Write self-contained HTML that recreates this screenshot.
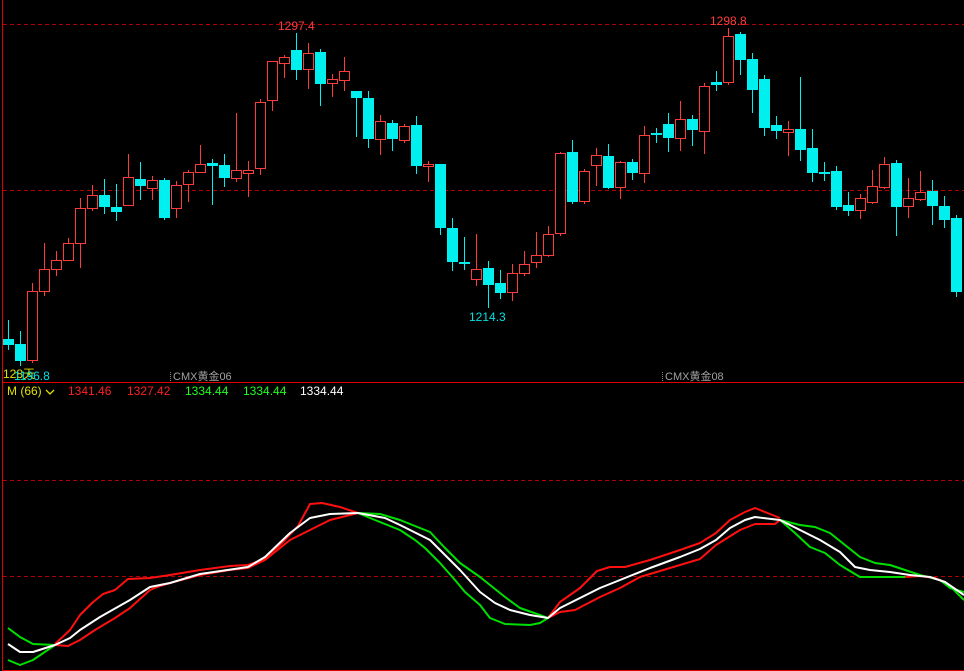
<!DOCTYPE html>
<html><head><meta charset="utf-8"><style>
html,body{margin:0;padding:0;background:#000;width:964px;height:671px;overflow:hidden}
svg{display:block}
text{font-family:"Liberation Sans","Noto Sans CJK SC",sans-serif;font-size:12px}
</style></head><body>
<svg width="964" height="671" viewBox="0 0 964 671" xmlns="http://www.w3.org/2000/svg">
<rect width="964" height="671" fill="#000"/>
<path stroke="#b00000" stroke-dasharray="4,3" shape-rendering="crispEdges" d="M3 24.5H964M3 190.5H964M3 480.5H964M3 576.5H964"/>
<path stroke="#e00000" shape-rendering="crispEdges" d="M2.5 0V671M3 382.5H964M3 670.5H964"/>
<path shape-rendering="crispEdges" stroke="#ff3c3c" fill="none" d="M32.5 283V363M44.5 243V296M56.5 251V276M68.5 238V260M80.5 198V268M92.5 185V211M128.5 154V205M152.5 176V200M176.5 181V218M188.5 170V202M200.5 145V172M236.5 113V182M248.5 161V197M260.5 99V175M272.5 61V111M284.5 55V78M308.5 43V89M332.5 74V97M344.5 57V91M380.5 115V155M404.5 124V143M428.5 161V182M476.5 234V286M512.5 264V301M524.5 251V276M536.5 232V268M548.5 226V257M560.5 152V236M584.5 169V204M596.5 148V186M620.5 161V199M644.5 126V183M680.5 101V151M704.5 83V154M728.5 28V85M788.5 121V156M860.5 194V219M872.5 170V204M884.5 157V189M908.5 178V218M920.5 171V201"/>
<path shape-rendering="crispEdges" stroke="#00f0f0" fill="none" d="M8.5 320V350M20.5 331V366M104.5 179V214M116.5 184V221M140.5 162V200M164.5 178V220M212.5 159V205M224.5 154V187M296.5 33V80M320.5 49V106M356.5 91V137M368.5 91V148M392.5 120V151M416.5 116V174M440.5 164V235M452.5 218V271M464.5 237V270M488.5 261V308M500.5 270V299M572.5 140V204M608.5 144V189M632.5 159V180M656.5 128V143M668.5 113V152M692.5 115V146M716.5 71V91M740.5 32V75M752.5 53V113M764.5 75V136M776.5 116V139M800.5 77V161M812.5 129V182M824.5 162V181M836.5 166V210M848.5 192V216M896.5 160V236M932.5 180V225M944.5 196V228M956.5 215V297"/>
<path fill="#000" stroke="#ff3c3c" shape-rendering="crispEdges" d="M27.5 291.5h10v69h-10zM39.5 269.5h10v22h-10zM51.5 260.5h10v9h-10zM63.5 243.5h10v17h-10zM75.5 208.5h10v35h-10zM87.5 195.5h10v13h-10zM123.5 177.5h10v28h-10zM147.5 180.5h10v8h-10zM171.5 185.5h10v23h-10zM183.5 172.5h10v12h-10zM195.5 164.5h10v8h-10zM231.5 170.5h10v8h-10zM243.5 170.5h10v3h-10zM255.5 102.5h10v66h-10zM267.5 61.5h10v39h-10zM279.5 57.5h10v6h-10zM303.5 53.5h10v16h-10zM327.5 79.5h10v4h-10zM339.5 71.5h10v9h-10zM375.5 121.5h10v18h-10zM399.5 126.5h10v14h-10zM423.5 164.5h10v2h-10zM471.5 269.5h10v10h-10zM507.5 273.5h10v19h-10zM519.5 264.5h10v9h-10zM531.5 255.5h10v7h-10zM543.5 234.5h10v21h-10zM555.5 153.5h10v80h-10zM579.5 171.5h10v30h-10zM591.5 155.5h10v10h-10zM615.5 162.5h10v25h-10zM639.5 135.5h10v38h-10zM675.5 119.5h10v19h-10zM699.5 86.5h10v45h-10zM723.5 36.5h10v46h-10zM783.5 129.5h10v3h-10zM855.5 198.5h10v12h-10zM867.5 186.5h10v16h-10zM879.5 164.5h10v23h-10zM903.5 198.5h10v8h-10zM915.5 192.5h10v7h-10z"/>
<path fill="#00f0f0" shape-rendering="crispEdges" d="M3 339h11v6h-11zM15 344h11v17h-11zM99 195h11v12h-11zM111 207h11v5h-11zM135 179h11v7h-11zM159 180h11v38h-11zM207 163h11v3h-11zM219 165h11v13h-11zM291 50h11v20h-11zM315 52h11v32h-11zM351 91h11v7h-11zM363 98h11v41h-11zM387 123h11v16h-11zM411 125h11v41h-11zM435 164h11v64h-11zM447 228h11v34h-11zM459 262h11v2h-11zM483 268h11v17h-11zM495 283h11v10h-11zM567 152h11v50h-11zM603 156h11v32h-11zM627 162h11v11h-11zM651 133h11v2h-11zM663 124h11v14h-11zM687 119h11v11h-11zM711 82h11v3h-11zM735 34h11v26h-11zM747 59h11v31h-11zM759 79h11v49h-11zM771 125h11v6h-11zM795 129h11v21h-11zM807 148h11v25h-11zM819 172h11v2h-11zM831 171h11v36h-11zM843 205h11v6h-11zM891 163h11v44h-11zM927 191h11v15h-11zM939 206h11v14h-11zM951 218h11v74h-11z"/>
<text x="278" y="30" fill="#ff3c3c">1297.4</text>
<text x="710" y="25" fill="#ff3c3c">1298.8</text>
<text x="469" y="321" fill="#00e0e0">1214.3</text>
<text x="3" y="378" fill="#e0e000">128天</text>
<text x="14" y="380" fill="#00e0e0">1196.8</text>
<path d="M170.5 372V382M662.5 372V382" stroke="#808080" stroke-dasharray="1,1"/>
<text x="173" y="380" fill="#a0a0a0" style="font-size:11px">CMX黄金06</text>
<text x="665" y="380" fill="#a0a0a0" style="font-size:11px">CMX黄金08</text>
<text x="7" y="395" fill="#e0e000">M (66)</text>
<path d="M46 390L50 394L54 390" stroke="#e0e000" stroke-width="1.3" fill="none"/>
<text x="68" y="395" fill="#ff2020">1341.46</text>
<text x="127" y="395" fill="#ff2020">1327.42</text>
<text x="185" y="395" fill="#20ff20">1334.44</text>
<text x="243" y="395" fill="#20ff20">1334.44</text>
<text x="300" y="395" fill="#ffffff">1334.44</text>
<g fill="none" stroke-width="2" stroke-linejoin="round">
<path stroke="#00e000" d="M8 628L20 637L33 644L55 645M8 660L20 665L33 660L55 645M358 513L380 514L400 520L430 532L445 548L460 563L480 577L490 585L505 597L520 608L540 615L548 618M358 513L375 520L400 530L415 540L425 548L440 563L455 580L465 592L480 605L490 618L505 624L530 625L540 623L548 618M780 520L800 525L815 527L830 533L845 545L860 557L875 563L890 565L905 570L920 575L940 580L950 588L964 592M780 520L795 533L810 547L825 553L840 565L860 577L885 577L905 577M940 580L950 586L964 600"/>
<path stroke="#ff1010" d="M55 644L70 630L80 615L92 603L103 594L115 590L128 579L150 578L170 575L200 570L230 566L248 565L262 560L280 545L298 526L310 504L322 503L340 507L358 513M55 645L68 646L80 640L95 630L115 618L130 608L150 590L160 586L170 583L200 575L230 570L248 568L265 560L290 540L310 530L330 520L350 515L358 513M548 618L560 602L580 588L597 571L610 567L625 567L650 560L680 550L700 543L716 533L730 520L745 512L755 508L770 514L780 518M548 618L560 612L575 610L600 597L620 588L640 577L660 571L680 565L700 559L716 545L740 530L755 524L775 524L780 520M905 577L920 576L935 578L945 582"/>
<path stroke="#ffffff" d="M8 644L20 652L33 652L55 645L70 638L80 630L100 617L130 600L150 587L170 583L200 574L248 567L265 557L290 533L310 518L330 514L358 513L385 518L400 525L420 535L430 540L445 555L460 570L480 592L495 603L510 610L530 615L548 618L560 608L580 598L600 588L620 580L650 568L680 557L700 549L716 540L730 528L745 520L755 517L780 520L800 530L820 540L840 552L855 567L870 570L890 572L910 575L930 577L945 582L964 595"/>
</g>
</svg>
</body></html>
